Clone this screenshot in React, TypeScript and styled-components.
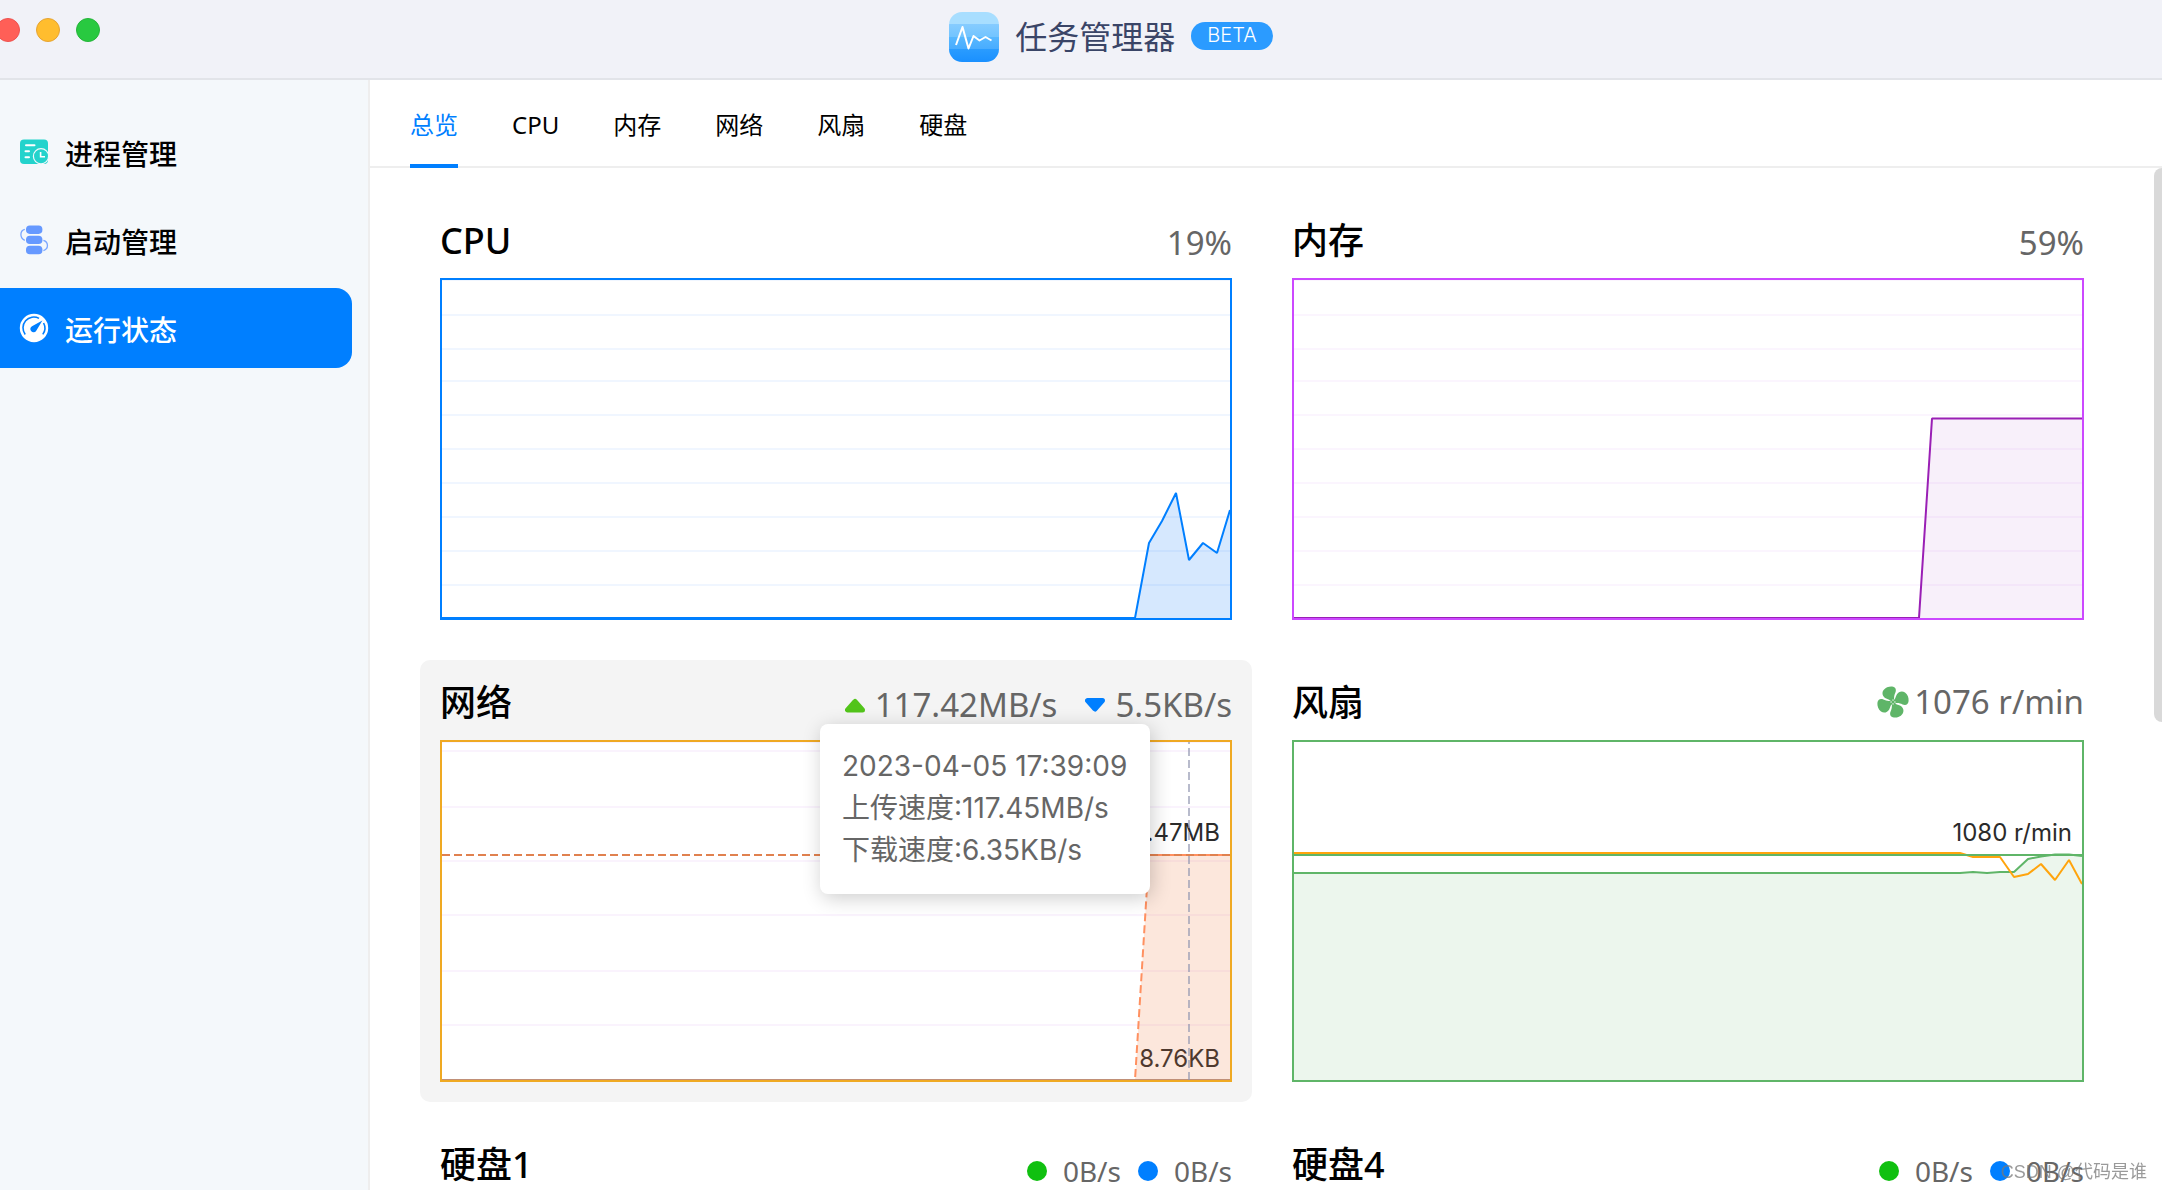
import React from "react";
import styled, { createGlobalStyle } from "styled-components";

const GlobalStyle = createGlobalStyle`
  *, *::before, *::after { box-sizing: border-box; }
  body {
    margin: 0;
    background: #fff;
    color: #000;
    font-family: "Noto Sans", "Noto Sans CJK SC", sans-serif;
  }
  button { font: inherit; border: 0; padding: 0; background: none; cursor: pointer; }
  h1, h2, p { margin: 0; font-weight: 400; }
`;

const Window = styled.div`
  height: 100vh;
  display: flex;
  flex-direction: column;
  overflow: hidden;
`;

const TitleBar = styled.header`
  flex: none;
  height: 80px;
  display: grid;
  grid-template-columns: 1fr auto 1fr;
  align-items: center;
  padding: 0 0 4px 60px;
  background: #f1f2f8;
  border-bottom: 2px solid #e2e4e9;
`;

const Lights = styled.div`
  display: flex;
  gap: 16px;
  align-self: start;
  margin: 18px 0 0 -64px;
`;

const Light = styled.button<{ $fill: string; $edge: string }>`
  width: 24px;
  height: 24px;
  border-radius: 50%;
  background: ${(p) => p.$fill};
  border: 1px solid ${(p) => p.$edge};
`;

const Brand = styled.div`
  display: flex;
  align-items: center;
  gap: 16px;
`;

const BrandName = styled.h1`
  padding-bottom: 4px;
  font-family: "Noto Sans CJK SC", sans-serif;
  font-size: 32px;
  line-height: 44px;
  color: #3a4567;
`;

const Beta = styled.span`
  height: 28px;
  margin-bottom: 2px;
  padding: 0 16px;
  border-radius: 14px;
  background: #2b9bff;
  color: #fff;
  font-family: Inter, sans-serif;
  font-weight: 300;
  font-size: 20px;
  line-height: 27px;
`;

const Body = styled.div`
  flex: 1;
  min-height: 0;
  display: flex;
`;

const Sidebar = styled.nav`
  flex: none;
  width: 370px;
  padding: 32px 16px 0 0;
  display: flex;
  flex-direction: column;
  gap: 8px;
  background: #f4f8fb;
  border-right: 2px solid #eeeeee;
`;

const SideItem = styled.button<{ $active?: boolean }>`
  height: 80px;
  padding: 4px 20px 0;
  display: flex;
  align-items: center;
  gap: 17px;
  border-radius: 0 16px 16px 0;
  background: ${(p) => (p.$active ? "#007fff" : "transparent")};
  color: ${(p) => (p.$active ? "#fff" : "#000")};
  font-weight: 500;
  font-size: 28px;
  line-height: 40px;
  svg { flex: none; margin-bottom: 4px; overflow: visible; }
`;

const Main = styled.main`
  flex: 1;
  min-width: 0;
  display: flex;
  flex-direction: column;
`;

const Tabs = styled.div`
  flex: none;
  height: 88px;
  padding-left: 40px;
  display: flex;
  gap: 54px;
  border-bottom: 2px solid #eeeeee;
`;

const Tab = styled.button<{ $active?: boolean }>`
  height: 88px;
  padding-top: 6px;
  border-bottom: 4px solid ${(p) => (p.$active ? "#007fff" : "transparent")};
  color: ${(p) => (p.$active ? "#007fff" : "#000")};
  font-size: 24px;
  line-height: 36px;
`;

const Scroller = styled.div`
  flex: 1;
  min-height: 0;
  display: flex;
  align-items: flex-start;
`;

const Board = styled.div`
  flex: 1;
  min-width: 0;
  padding: 30px 50px;
  display: grid;
  grid-template-columns: repeat(2, minmax(0, 1fr));
  gap: 20px;
`;

const ScrollThumb = styled.div`
  flex: none;
  width: 8px;
  height: 554px;
  border-radius: 8px 0 0 8px;
  background: #d9d9d9;
`;

const Card = styled.section<{ $hover?: boolean }>`
  padding: 20px;
  border-radius: 10px;
  background: ${(p) => (p.$hover ? "#f4f4f4" : "transparent")};
`;

const CardHead = styled.div`
  height: 60px;
  display: flex;
  justify-content: space-between;
  align-items: flex-start;
`;

const CardTitle = styled.h2`
  font-weight: 500;
  font-size: 36px;
  line-height: 46px;
`;

const Readings = styled.div<{ $gap: number }>`
  display: flex;
  gap: ${(p) => p.$gap}px;
`;

const Reading = styled.span<{ $gap?: number; $raised?: boolean }>`
  display: flex;
  align-items: center;
  gap: ${(p) => p.$gap ?? 0}px;
  color: #666;
  font-size: 33px;
  line-height: ${(p) => (p.$raised ? 44 : 50)}px;
`;

const DiskReading = styled(Reading)`
  font-size: 28px;
  line-height: 58px;
`;

const Dot = styled.i<{ $color: string }>`
  width: 20px;
  height: 20px;
  border-radius: 50%;
  background: ${(p) => p.$color};
`;

const Plot = styled.div<{ $color: string }>`
  position: relative;
  height: 342px;
  border: 2px solid ${(p) => p.$color};
  background: #fff;
  svg { position: relative; display: block; width: 100%; height: 100%; }
`;

const PlotLabel = styled.span<{ $top: number }>`
  position: absolute;
  top: ${(p) => p.$top}px;
  right: 10px;
  color: #2b2b2b;
  font-family: Inter, sans-serif;
  font-size: 24px;
  line-height: 30px;
`;

const Tooltip = styled.div`
  position: absolute;
  top: -18px;
  right: 80px;
  width: 330px;
  height: 170px;
  padding: 21px 22px;
  border-radius: 8px;
  background: #fff;
  box-shadow: 2px 4px 20px rgba(0, 0, 0, 0.2);
  color: #666;
  font-family: Inter, "Noto Sans CJK SC", sans-serif;
  font-size: 28px;
  line-height: 42px;
  white-space: nowrap;
`;

const Watermark = styled.div`
  position: fixed;
  right: 15px;
  bottom: 6px;
  color: rgba(120, 120, 120, 0.75);
  font-family: "Liberation Sans", "Noto Sans CJK SC", sans-serif;
  font-size: 18px;
  line-height: 24px;
`;

const LogoIcon = () => (
  <svg width="50" height="50" viewBox="0 0 50 50" aria-hidden="true">
    <defs>
      <clipPath id="logo"><rect width="50" height="50" rx="13" /></clipPath>
      <linearGradient id="band2" x1="0" y1="0" x2="0" y2="1"><stop offset="0" stopColor="#86ccff" /><stop offset="1" stopColor="#72c4ff" /></linearGradient>
      <linearGradient id="band3" x1="0" y1="0" x2="0" y2="1"><stop offset="0" stopColor="#58b8ff" /><stop offset="1" stopColor="#48acff" /></linearGradient>
      <linearGradient id="band4" x1="0" y1="0" x2="0" y2="1"><stop offset="0" stopColor="#2a9cff" /><stop offset="1" stopColor="#1a90ff" /></linearGradient>
    </defs>
    <g clipPath="url(#logo)">
      <rect width="50" height="12" fill="#a8deff" />
      <rect y="12" width="50" height="13" fill="url(#band2)" />
      <rect y="25" width="50" height="12" fill="url(#band3)" />
      <rect y="37" width="50" height="13" fill="url(#band4)" />
    </g>
    <polyline points="7,33 13.5,15 19.5,36.5 24.5,24 30.5,28.5 36.5,25 42.5,28.5" fill="none" stroke="#fff" strokeWidth="2" strokeLinejoin="round" />
  </svg>
);

const ProcessIcon = () => (
  <svg width="28" height="28" viewBox="0 0 28 28" aria-hidden="true">
    <rect x="0" y="1.5" width="28" height="24.5" rx="4" fill="#23d3cc" />
    <path d="M6 7.2h8.5M5.500 13.200h3.500M5.500 19.200h3.500" stroke="#fff" strokeWidth="2" strokeLinecap="round" />
    <circle cx="21" cy="18.3" r="7.6" fill="#23d3cc" stroke="#f4f8fb" strokeWidth="1.2" />
    <path d="M20.6 14v4.8h4.4" fill="none" stroke="#fff" strokeWidth="1.6" />
  </svg>
);

const StartupIcon = () => (
  <svg width="28" height="28" viewBox="0 0 28 28" aria-hidden="true">
    <g fill="#6699ff">
      <rect x="6" y="-0.5" width="16.4" height="8.4" rx="3.8" />
      <rect x="6" y="9.7" width="16.4" height="8.4" rx="3.8" />
      <rect x="6" y="19.8" width="16.4" height="8.4" rx="3.8" />
    </g>
    <g fill="none" stroke="#7aa6ff" strokeWidth="1.3">
      <path d="M4.8 3.4C0 4.5 -0.8 11.5 4.8 14.3" />
      <path d="M23.4 14.4C28.8 16 28.8 23 23.4 24.6" />
    </g>
  </svg>
);

const GaugeIcon = () => (
  <svg width="28" height="28" viewBox="0 0 28 28" aria-hidden="true">
    <circle cx="14" cy="14" r="14.2" fill="#fff" />
    <g fill="none" stroke="#007fff" strokeWidth="1.6">
      <path d="M5.2 20.4A10.8 10.8 0 0 1 19 4.4" />
      <path d="M23.6 9A10.8 10.8 0 0 1 22.8 20.4" />
    </g>
    <path d="M22.4 6.4L16.4 16.4A3.2 3.2 0 1 1 12 12.2Z" fill="#007fff" />
  </svg>
);

const FanIcon = () => (
  <svg width="32" height="32" viewBox="0 0 32 32" aria-hidden="true">
    <g fill="#5fb568">
      {[0, 90, 180, 270].map((angle) => (
        <path
          key={angle}
          transform={`rotate(${angle} 16 16)`}
          d="M14.4 15.6C13.6 13.6 11 13.6 8.6 12.2C5.4 10.4 4.6 6.6 6.6 4C8.6 1.2 12 0.2 15 0.4C18.6 0.8 19.6 3.4 18.4 6.4C17.4 9 16.6 11 17.4 14.4Z"
        />
      ))}
      <circle cx="16" cy="16" r="2.6" />
    </g>
    <path d="M16 13.4v1.4M16 17.2v1.4M13.4 16h1.4M17.2 16h1.4" stroke="#fff" strokeWidth="1" />
  </svg>
);

const Triangle = ({ down, color }: { down?: boolean; color: string }) => (
  <svg width="20" height="16" viewBox="0 0 20 16" aria-hidden="true">
    <path
      d={down ? "M2.5 3.5h15L10 12Z" : "M2.5 13h15L10 4.5Z"}
      fill={color}
      stroke={color}
      strokeWidth="5"
      strokeLinejoin="round"
    />
  </svg>
);

type Point = [number, number];

const PLOT_W = 788;
const PLOT_H = 338;

interface SeriesProps {
  points: Point[];
  color: string;
  fill?: string;
  dash?: string;
}

const Series = ({ points, color, fill, dash }: SeriesProps) => {
  const line = points.map((p) => p.join(",")).join(" ");
  return (
    <>
      {fill && <polygon points={`${line} ${PLOT_W},${PLOT_H} 0,${PLOT_H}`} fill={fill} />}
      <polyline points={line} fill="none" stroke={color} strokeWidth="2" strokeDasharray={dash} strokeLinejoin="bevel" vectorEffect="non-scaling-stroke" />
    </>
  );
};

interface ChartProps {
  border: string;
  gridColor?: string;
  gridLines?: number[];
  labels?: React.ReactNode;
  overlay?: React.ReactNode;
  children?: React.ReactNode;
}

const Chart = ({ border, gridColor, gridLines = [], labels, overlay, children }: ChartProps) => (
  <Plot $color={border}>
    {labels}
    <svg viewBox={`0 0 ${PLOT_W} ${PLOT_H}`} preserveAspectRatio="none" role="img">
      {gridLines.map((y) => (
        <line key={y} x1="0" x2={PLOT_W} y1={y} y2={y} stroke={gridColor} strokeWidth="2" />
      ))}
      {children}
    </svg>
    {overlay}
  </Plot>
);

const TENTHS = [0, 35, 69, 101, 135, 169, 203, 237, 271, 305];
const NET_GRID = [0, 9, 65, 119, 173, 229, 283];

const CPU: Point[] = [[0, 338], [693, 338], [707, 263], [720, 241], [734, 213], [747, 280], [761, 263], [775, 273], [788, 230]];
const MEMORY: Point[] = [[0, 338], [625, 338], [638, 138.5], [788, 138.5]];
const UPLOAD: Point[] = [[0, 338], [693, 338], [707, 113], [788, 113]];
const FAN_A: Point[] = [[0, 131], [666, 131], [679, 130], [693, 131], [706, 130], [720, 130], [734, 117], [747, 114.5], [761, 112.5], [775, 112.5], [788, 114]];
const FAN_B: Point[] = [[0, 111], [666, 111], [679, 115], [706, 115], [720, 135], [734, 132], [747, 122], [761, 138], [775, 118], [788, 142]];

const DiskReadings = () => (
  <Readings $gap={17}>
    <DiskReading $gap={16}><Dot $color="#10c010" />0B/s</DiskReading>
    <DiskReading $gap={16}><Dot $color="#007fff" />0B/s</DiskReading>
  </Readings>
);

const SIDE = [
  { name: "进程管理", icon: <ProcessIcon /> },
  { name: "启动管理", icon: <StartupIcon /> },
  { name: "运行状态", icon: <GaugeIcon />, active: true },
];

const TABS = ["总览", "CPU", "内存", "网络", "风扇", "硬盘"];

export default function App() {
  return (
    <Window>
      <GlobalStyle />
      <TitleBar>
        <Lights>
          <Light $fill="#ff5f57" $edge="#ee5350" aria-label="关闭" />
          <Light $fill="#ffbd2e" $edge="#e6a433" aria-label="最小化" />
          <Light $fill="#28c940" $edge="#25b53a" aria-label="最大化" />
        </Lights>
        <Brand>
          <LogoIcon />
          <BrandName>任务管理器</BrandName>
          <Beta>BETA</Beta>
        </Brand>
      </TitleBar>
      <Body>
        <Sidebar>
          {SIDE.map((s) => (
            <SideItem key={s.name} $active={s.active}>
              {s.icon}
              {s.name}
            </SideItem>
          ))}
        </Sidebar>
        <Main>
          <Tabs role="tablist">
            {TABS.map((t, i) => (
              <Tab key={t} role="tab" aria-selected={i === 0} $active={i === 0}>{t}</Tab>
            ))}
          </Tabs>
          <Scroller>
            <Board>
              <Card>
                <CardHead>
                  <CardTitle>CPU</CardTitle>
                  <Reading>19%</Reading>
                </CardHead>
                <Chart border="#007fff" gridColor="#f0f6ff" gridLines={TENTHS}>
                  <Series points={CPU} color="#007fff" fill="rgba(0,110,250,0.16)" />
                </Chart>
              </Card>
              <Card>
                <CardHead>
                  <CardTitle>内存</CardTitle>
                  <Reading>59%</Reading>
                </CardHead>
                <Chart border="#cc48ff" gridColor="#fbf5fe" gridLines={TENTHS}>
                  <Series points={MEMORY} color="#9a1fb5" fill="rgba(150,40,180,0.07)" />
                </Chart>
              </Card>
              <Card $hover>
                <CardHead>
                  <CardTitle>网络</CardTitle>
                  <Readings $gap={28}>
                    <Reading $gap={10}><Triangle color="#52c41a" />117.42MB/s</Reading>
                    <Reading $gap={10}><Triangle down color="#007fff" />5.5KB/s</Reading>
                  </Readings>
                </CardHead>
                <Chart
                  border="#efa922"
                  gridColor="#faf3fd"
                  gridLines={NET_GRID}
                  labels={
                    <>
                      <PlotLabel $top={76}>117.47MB</PlotLabel>
                      <PlotLabel $top={302}>8.76KB</PlotLabel>
                    </>
                  }
                  overlay={
                    <Tooltip role="tooltip">
                      <p>2023-04-05 17:39:09</p>
                      <p>上传速度:117.45MB/s</p>
                      <p>下载速度:6.35KB/s</p>
                    </Tooltip>
                  }
                >
                  <Series points={UPLOAD} color="#ff9060" fill="rgba(236,120,60,0.18)" dash="8 4" />
                  <line x1="0" x2="788" y1="338" y2="338" stroke="#c09078" strokeWidth="2" />
                  <line x1="0" x2="788" y1="113" y2="113" stroke="#e0814f" strokeWidth="2" strokeDasharray="8 4" />
                  <line x1="747" x2="747" y1="0" y2="338" stroke="#9296b0" strokeOpacity="0.65" strokeWidth="2" strokeDasharray="8 4" strokeDashoffset="6" />
                </Chart>
              </Card>
              <Card>
                <CardHead>
                  <CardTitle>风扇</CardTitle>
                  <Reading $gap={5} $raised><FanIcon />1076 r/min</Reading>
                </CardHead>
                <Chart border="#5fb568" labels={<PlotLabel $top={76}>1080 r/min</PlotLabel>}>
                  <Series points={FAN_A} color="#5fb568" fill="rgba(95,181,104,0.12)" />
                  <Series points={FAN_B} color="#ffa40d" />
                  <line x1="0" x2="788" y1="113" y2="113" stroke="#5fb568" strokeWidth="2" />
                </Chart>
              </Card>
              <Card>
                <CardHead>
                  <CardTitle>硬盘1</CardTitle>
                  <DiskReadings />
                </CardHead>
                <Chart border="#007fff" />
              </Card>
              <Card>
                <CardHead>
                  <CardTitle>硬盘4</CardTitle>
                  <DiskReadings />
                </CardHead>
                <Chart border="#007fff" />
              </Card>
            </Board>
            <ScrollThumb />
          </Scroller>
        </Main>
      </Body>
      <Watermark>CSDN @代码是谁</Watermark>
    </Window>
  );
}
